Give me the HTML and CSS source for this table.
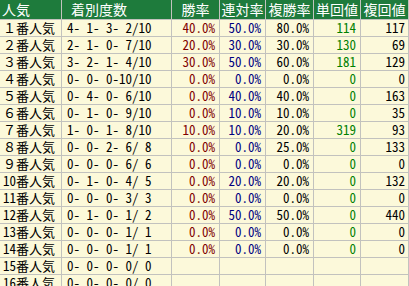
FILE: index.html
```html
<!DOCTYPE html>
<html lang="ja">
<head>
<meta charset="utf-8">
<link rel="stylesheet" href="styles.css">
</head>
<body>
<div class="tbl">
  <div class="h h-left">人気</div>
  <div class="h h-left2">着別度数</div>
  <div class="h">勝率</div>
  <div class="h">連対率</div>
  <div class="h">複勝率</div>
  <div class="h">単回値</div>
  <div class="h">複回値</div>

  <div class="c lbl">１番人気</div><div class="c rec">4- 1- 3- 2/10</div><div class="c r win">40.0%</div><div class="c r ren">50.0%</div><div class="c r fuku">80.0%</div><div class="c r tan">114</div><div class="c r fk">117</div>
  <div class="c lbl">２番人気</div><div class="c rec">2- 1- 0- 7/10</div><div class="c r win">20.0%</div><div class="c r ren">30.0%</div><div class="c r fuku">30.0%</div><div class="c r tan">130</div><div class="c r fk">69</div>
  <div class="c lbl">３番人気</div><div class="c rec">3- 2- 1- 4/10</div><div class="c r win">30.0%</div><div class="c r ren">50.0%</div><div class="c r fuku">60.0%</div><div class="c r tan">181</div><div class="c r fk">129</div>
  <div class="c lbl">４番人気</div><div class="c rec">0- 0- 0-10/10</div><div class="c r win">0.0%</div><div class="c r ren">0.0%</div><div class="c r fuku">0.0%</div><div class="c r tan">0</div><div class="c r fk">0</div>
  <div class="c lbl">５番人気</div><div class="c rec">0- 4- 0- 6/10</div><div class="c r win">0.0%</div><div class="c r ren">40.0%</div><div class="c r fuku">40.0%</div><div class="c r tan">0</div><div class="c r fk">163</div>
  <div class="c lbl">６番人気</div><div class="c rec">0- 1- 0- 9/10</div><div class="c r win">0.0%</div><div class="c r ren">10.0%</div><div class="c r fuku">10.0%</div><div class="c r tan">0</div><div class="c r fk">35</div>
  <div class="c lbl">７番人気</div><div class="c rec">1- 0- 1- 8/10</div><div class="c r win">10.0%</div><div class="c r ren">10.0%</div><div class="c r fuku">20.0%</div><div class="c r tan">319</div><div class="c r fk">93</div>
  <div class="c lbl">８番人気</div><div class="c rec">0- 0- 2- 6/ 8</div><div class="c r win">0.0%</div><div class="c r ren">0.0%</div><div class="c r fuku">25.0%</div><div class="c r tan">0</div><div class="c r fk">133</div>
  <div class="c lbl">９番人気</div><div class="c rec">0- 0- 0- 6/ 6</div><div class="c r win">0.0%</div><div class="c r ren">0.0%</div><div class="c r fuku">0.0%</div><div class="c r tan">0</div><div class="c r fk">0</div>
  <div class="c lbl">10番人気</div><div class="c rec">0- 1- 0- 4/ 5</div><div class="c r win">0.0%</div><div class="c r ren">20.0%</div><div class="c r fuku">20.0%</div><div class="c r tan">0</div><div class="c r fk">132</div>
  <div class="c lbl">11番人気</div><div class="c rec">0- 0- 0- 3/ 3</div><div class="c r win">0.0%</div><div class="c r ren">0.0%</div><div class="c r fuku">0.0%</div><div class="c r tan">0</div><div class="c r fk">0</div>
  <div class="c lbl">12番人気</div><div class="c rec">0- 1- 0- 1/ 2</div><div class="c r win">0.0%</div><div class="c r ren">50.0%</div><div class="c r fuku">50.0%</div><div class="c r tan">0</div><div class="c r fk">440</div>
  <div class="c lbl">13番人気</div><div class="c rec">0- 0- 0- 1/ 1</div><div class="c r win">0.0%</div><div class="c r ren">0.0%</div><div class="c r fuku">0.0%</div><div class="c r tan">0</div><div class="c r fk">0</div>
  <div class="c lbl">14番人気</div><div class="c rec">0- 0- 0- 1/ 1</div><div class="c r win">0.0%</div><div class="c r ren">0.0%</div><div class="c r fuku">0.0%</div><div class="c r tan">0</div><div class="c r fk">0</div>
  <div class="c lbl">15番人気</div><div class="c rec">0- 0- 0- 0/ 0</div><div class="c"></div><div class="c"></div><div class="c"></div><div class="c"></div><div class="c"></div>
  <div class="c lbl">16番人気</div><div class="c rec">0- 0- 0- 0/ 0</div><div class="c"></div><div class="c"></div><div class="c"></div><div class="c"></div><div class="c"></div>
</div>
</body>
</html>
```

FILE: styles.css
```css
html, body {
  margin: 0;
  padding: 0;
  background: #ffffff;
}

.tbl {
  display: grid;
  grid-template-columns: 61px 109px 47px 45px 47px 46px 47px;
  grid-template-rows: 19px;
  grid-auto-rows: 16px;
  column-gap: 1px;
  row-gap: 1px;
  padding-right: 1px;
  width: max-content;
  background: #c2c2be;
  font-family: "Noto Sans Mono CJK JP", "Noto Sans CJK JP", "DejaVu Sans Mono", monospace;
  font-weight: 300;
}

.h {
  background: #1e7b3c;
  color: #ffffff;
  font-size: 14px;
  line-height: 19px;
  text-align: center;
  white-space: pre;
}

.h-left {
  text-align: left;
  padding-left: 2px;
}

.h-left2 {
  text-align: left;
  padding-left: 9px;
}

.c {
  background: #fcf9da;
  color: #000000;
  font-size: 13px;
  line-height: 16px;
  white-space: pre;
}

.lbl {
  padding-left: 3px;
}

.rec {
  padding-left: 5px;
}

.r {
  text-align: right;
  padding-right: 4px;
}

.win { color: #800000; }
.ren { color: #000080; }
.fuku { color: #000000; }
.tan { color: #008000; }
.fk { color: #000000; padding-right: 3px; }
```
